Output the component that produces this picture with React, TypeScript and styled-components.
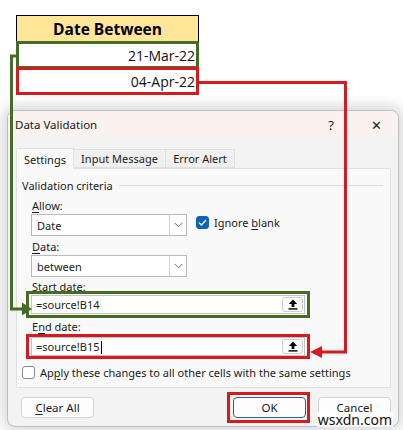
import React from 'react';
import styled, { createGlobalStyle } from 'styled-components';

const GREEN = '#456b24';
const RED = '#d41b1f';

const GlobalStyle = createGlobalStyle`
  html, body {
    margin: 0;
    padding: 0;
    background: #ffffff;
  }
  * {
    box-sizing: border-box;
  }
`;

const Page = styled.div`
  position: relative;
  width: 403px;
  height: 430px;
  overflow: hidden;
  background: #ffffff;
  font-family: 'Noto Sans', 'Open Sans', sans-serif;
  font-size: 11px;
  color: #1b1b1b;
`;

/* ---------- sheet cells ---------- */

const Sheet = styled.div`
  display: flex;
  flex-direction: column;
  width: 183px;
  margin: 15px 0 0 16px;
  font-family: 'Open Sans', 'Liberation Sans', sans-serif;
`;

const HeaderCell = styled.div`
  height: 27px;
  background: #ffe699;
  border: 1px solid #000;
  display: flex;
  align-items: center;
  justify-content: center;
  font-weight: 700;
  font-size: 15.5px;
  color: #000;
`;

const DateCell = styled.div<{ $color: string; $overlap?: boolean }>`
  height: 28px;
  border: 3px solid ${(p) => p.$color};
  margin-top: ${(p) => (p.$overlap ? '-2px' : '-1px')};
  display: flex;
  align-items: center;
  justify-content: flex-end;
  padding-right: 1px;
  font-size: 14px;
  color: #111;
  background: #fff;
`;

/* ---------- dialog ---------- */

const Dialog = styled.div`
  margin: 15px 0 0 7px;
  width: 392px;
  height: 317px;
  border: 1px solid #bdbdbd;
  border-radius: 8px;
  background: #f3f3f3;
  box-shadow: 0 0 14px 4px rgba(0, 0, 0, 0.16);
  overflow: hidden;
  display: flex;
  flex-direction: column;
`;

const TitleBar = styled.div`
  height: 27px;
  background: #f9f2ef;
  display: flex;
  align-items: center;
  padding-left: 7px;
  font-size: 11.5px;
  color: #1a1a1a;
`;

const Title = styled.span`
  flex: 1;
`;

const TitleButton = styled.span<{ $gap: number }>`
  width: 20px;
  margin-right: ${(p) => p.$gap}px;
  text-align: center;
  font-size: 13px;
  color: #222;
`;

const Body = styled.div`
  flex: 1;
  display: flex;
  flex-direction: column;
  padding: 10px 7px 0 8px;
`;

const Tabs = styled.div`
  display: flex;
  align-items: flex-end;
  height: 20px;
`;

const Tab = styled.div<{ $active?: boolean; $width: number }>`
  width: ${(p) => p.$width}px;
  height: ${(p) => (p.$active ? '21px' : '19px')};
  margin-bottom: ${(p) => (p.$active ? '-1px' : '0')};
  display: flex;
  align-items: center;
  justify-content: center;
  background: ${(p) => (p.$active ? '#f9f9f9' : '#f0f0f0')};
  border: 1px solid #e0e0e0;
  border-bottom: ${(p) => (p.$active ? 'none' : '1px solid #e0e0e0')};
  margin-left: ${(p) => (p.$active ? '0' : '-1px')};
  position: relative;
  z-index: ${(p) => (p.$active ? 1 : 0)};
`;

const Panel = styled.div`
  height: 220px;
  background: #f9f9f9;
  border: 1px solid #e0e0e0;
  padding: 8px 0 0 5px;
  display: flex;
  flex-direction: column;
`;

const GroupTitle = styled.div`
  display: flex;
  align-items: center;
  gap: 6px;
  height: 16px;
  padding-right: 7px;

  &::after {
    content: '';
    flex: 1;
    height: 1px;
    background: #dcdcdc;
  }
`;

const Field = styled.div<{ $top: number; $indent: number }>`
  display: flex;
  flex-direction: column;
  align-items: flex-start;
  margin-top: ${(p) => p.$top}px;
  padding-left: ${(p) => p.$indent}px;
`;

const Label = styled.div<{ $shift?: number; $after?: number }>`
  height: 14px;
  line-height: 14px;
  margin-left: ${(p) => p.$shift ?? 1}px;
  margin-bottom: ${(p) => p.$after ?? 1}px;

  u {
    text-underline-offset: 2px;
  }
`;

const Row = styled.div`
  display: flex;
  align-items: center;
`;

const Select = styled.div`
  width: 156px;
  height: 22px;
  background: #fff;
  border: 1px solid #b9b9b9;
  display: flex;
  align-items: stretch;
`;

const SelectValue = styled.div`
  flex: 1;
  display: flex;
  align-items: center;
  padding-left: 5px;
`;

const SelectArrow = styled.div`
  width: 17px;
  border-left: 1px solid #d6d6d6;
  display: flex;
  align-items: center;
  justify-content: center;
`;

const Check = styled.div<{ $checked?: boolean }>`
  width: 13px;
  height: 13px;
  flex: none;
  border-radius: 3px;
  background: ${(p) => (p.$checked ? '#0f62b8' : '#fff')};
  border: 1px solid ${(p) => (p.$checked ? '#0f62b8' : '#8a8a8a')};
  display: flex;
  align-items: center;
  justify-content: center;
`;

const CheckLabel = styled.label<{ $left?: number; $top?: number }>`
  display: flex;
  align-items: center;
  gap: 5px;
  margin-left: ${(p) => p.$left ?? 0}px;
  margin-top: ${(p) => p.$top ?? 0}px;

  u {
    text-underline-offset: 2px;
  }
`;

const Highlight = styled.div<{ $color: string; $pad: string }>`
  border: 3px solid ${(p) => p.$color};
  padding: ${(p) => p.$pad};
  display: flex;
`;

const RefInput = styled.div`
  width: 274px;
  height: 19px;
  background: #fff;
  border: 1px solid #c4c4c4;
  display: flex;
  align-items: center;
  justify-content: space-between;
  padding: 0 1px 0 4px;
`;

const Caret = styled.span`
  display: inline-block;
  width: 1px;
  height: 13px;
  background: #000;
  vertical-align: middle;
  margin-left: 1px;
`;

const PickButton = styled.div`
  width: 21px;
  height: 15px;
  border: 1px solid #d0d0d0;
  border-radius: 3px;
  background: #fdfdfd;
  display: flex;
  align-items: center;
  justify-content: center;
`;

const Footer = styled.div`
  flex: 1;
  display: flex;
  align-items: center;
  padding: 0 0 0 5px;
`;

const Button = styled.div<{ $primary?: boolean }>`
  width: 73px;
  height: 21px;
  border-radius: 4px;
  background: #fdfdfd;
  border: 1px solid ${(p) => (p.$primary ? '#2f5f91' : '#d3d3d3')};
  display: flex;
  align-items: center;
  justify-content: center;
  font-size: 11.5px;
  color: #1a1a1a;

  u {
    text-underline-offset: 2px;
  }
`;

const Spacer = styled.div`
  flex: 1;
`;

/* ---------- overlays ---------- */

const Connectors = styled.svg`
  position: absolute;
  left: 0;
  top: 0;
  pointer-events: none;
`;

const Watermark = styled.div`
  position: absolute;
  right: 10px;
  bottom: 3px;
  padding: 0 1px;
  background: rgba(255, 255, 255, 0.85);
  font-family: 'Noto Sans', sans-serif;
  font-size: 14px;
  line-height: 15px;
  color: #111;
`;

const Chevron = () => (
  <svg width="9" height="6" viewBox="0 0 9 6">
    <path d="M0.5 0.8 L4.5 4.8 L8.5 0.8" fill="none" stroke="#6a6a6a" strokeWidth="1" />
  </svg>
);

const Tick = () => (
  <svg width="9" height="7" viewBox="0 0 9 7">
    <path d="M1 3.6 L3.4 6 L8 1" fill="none" stroke="#fff" strokeWidth="1.3" />
  </svg>
);

const UploadIcon = () => (
  <svg width="10" height="11" viewBox="0 0 10 11">
    <path d="M5 0.5 L9.2 5 H6.4 V8 H3.6 V5 H0.8 Z" fill="#000" />
    <rect x="0.5" y="9.2" width="9" height="1.4" fill="#000" />
  </svg>
);

const DataValidation: React.FC = () => (
  <Dialog>
    <TitleBar>
      <Title>Data Validation</Title>
      <TitleButton $gap={25}>?</TitleButton>
      <TitleButton $gap={12}>✕</TitleButton>
    </TitleBar>
    <Body>
      <Tabs>
        <Tab $active $width={58}>
          Settings
        </Tab>
        <Tab $width={93}>Input Message</Tab>
        <Tab $width={70}>Error Alert</Tab>
      </Tabs>
      <Panel>
        <GroupTitle>Validation criteria</GroupTitle>
        <Field $top={6} $indent={9}>
          <Label>
            <u>A</u>llow:
          </Label>
          <Row>
            <Select>
              <SelectValue>Date</SelectValue>
              <SelectArrow>
                <Chevron />
              </SelectArrow>
            </Select>
            <CheckLabel $left={9} $top={-6}>
              <Check $checked>
                <Tick />
              </Check>
              <span>
                Ignore <u>b</u>lank
              </span>
            </CheckLabel>
          </Row>
        </Field>
        <Field $top={4} $indent={9}>
          <Label>
            <u>D</u>ata:
          </Label>
          <Select>
            <SelectValue>between</SelectValue>
            <SelectArrow>
              <Chevron />
            </SelectArrow>
          </Select>
        </Field>
        <Field $top={3} $indent={4}>
          <Label $shift={6} $after={-3}>
            <u>S</u>tart date:
          </Label>
          <Highlight $color={GREEN} $pad="1px 2px">
            <RefInput>
              <span>=source!B14</span>
              <PickButton>
                <UploadIcon />
              </PickButton>
            </RefInput>
          </Highlight>
        </Field>
        <Field $top={2} $indent={4}>
          <Label $shift={6} $after={0}>
            E<u>n</u>d date:
          </Label>
          <Highlight $color={RED} $pad="0 2px">
            <RefInput>
              <span>
                =source!B15
                <Caret />
              </span>
              <PickButton>
                <UploadIcon />
              </PickButton>
            </RefInput>
          </Highlight>
        </Field>
        <CheckLabel $left={0} $top={6}>
          <Check />
          <span>
            Ap<u>p</u>ly these changes to all other cells with the same settings
          </span>
        </CheckLabel>
      </Panel>
      <Footer>
        <Button>
          <u>C</u>lear All
        </Button>
        <Spacer />
        <Highlight $color={RED} $pad="2px 1px 2px 3px">
          <Button $primary>OK</Button>
        </Highlight>
        <Button style={{ marginLeft: 8 }}>Cancel</Button>
      </Footer>
    </Body>
  </Dialog>
);

const App: React.FC = () => (
  <Page>
    <GlobalStyle />
    <Sheet>
      <HeaderCell>Date Between</HeaderCell>
      <DateCell $color={GREEN}>21-Mar-22</DateCell>
      <DateCell $color={RED} $overlap>
        04-Apr-22
      </DateCell>
    </Sheet>
    <DataValidation />
    <Connectors width="403" height="430" viewBox="0 0 403 430">
      <path d="M16 56 H11.5 V309 H24" fill="none" stroke={GREEN} strokeWidth="3" />
      <polygon points="22,302.5 32,309 22,315.5" fill={GREEN} />
      <path d="M199 82.5 H345.5 V352 H320" fill="none" stroke={RED} strokeWidth="3" />
      <polygon points="322,346 310,352 322,358" fill={RED} />
    </Connectors>
    <Watermark>wsxdn.com</Watermark>
  </Page>
);

export default App;
